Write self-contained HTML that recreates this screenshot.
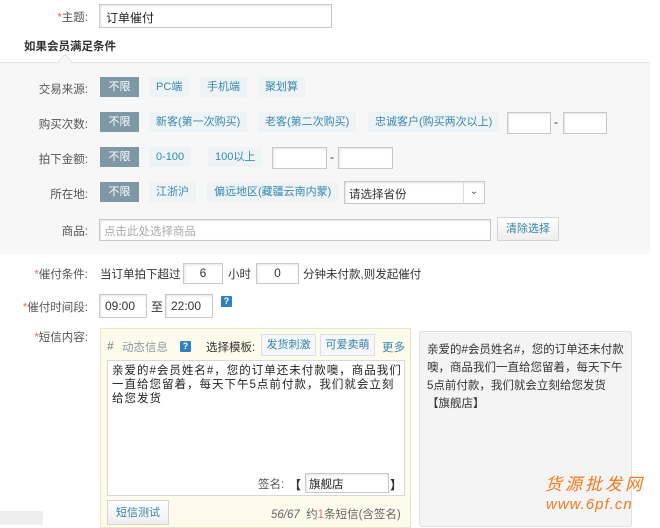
<!DOCTYPE html>
<html><head><meta charset="utf-8"><style>
*{box-sizing:border-box;margin:0;padding:0}
body{width:660px;height:525px;overflow:hidden;background:#fff;font:12px "Liberation Sans","Noto Sans CJK SC",sans-serif;color:#333;position:relative}
.a{position:absolute;white-space:nowrap}
.lbl{position:absolute;right:572px;text-align:right;color:#555;white-space:nowrap;font-size:11.5px}
.r{color:#e66}
.in{position:absolute;border:1px solid #c8c8c8;background:#fff;box-shadow:inset 1px 1px 2px #e4e4e4}
.bx{position:absolute;height:20px;line-height:20px;padding:0 7px;color:#3a88ad;background:#eef3f5;font-size:11px}
.on{background:#7e98a6;color:#fff;padding:0;width:39px;text-align:center}
.q{position:absolute;width:11px;height:11px;background:#2e80c0;color:#fff;font-size:9px;font-weight:bold;line-height:11px;text-align:center;border-radius:1px}
.btn{position:absolute;border:1px solid #d4d4d4;background:linear-gradient(#fff,#eee);color:#3a7fa8;text-align:center;font-size:11px}
</style></head><body>
<div class="lbl" style="top:9px"><span class="r">*</span>主题:</div>
<div class="in" style="left:99px;top:4px;width:233px;height:24px;padding:4px 6px;color:#222;font-size:12px">订单催付</div>
<div class="a" style="left:24px;top:38px;font-weight:bold;color:#333;font-size:11.5px">如果会员满足条件</div>
<div class="a" style="left:0;top:62px;width:650px;height:192px;background:#f7f7f7;border-top:1px solid #e4e4e4"></div>
<div class="a" style="left:60px;top:56px;width:10px;height:10px;background:#f7f7f7;border-left:1px solid #e4e4e4;border-top:1px solid #e4e4e4;transform:rotate(45deg)"></div>

<div class="lbl" style="top:81px">交易来源:</div>
<div class="bx on" style="left:100px;top:77px">不限</div>
<div class="bx" style="left:149px;top:77px">PC端</div>
<div class="bx" style="left:200px;top:77px">手机端</div>
<div class="bx" style="left:258px;top:77px">聚划算</div>

<div class="lbl" style="top:116px">购买次数:</div>
<div class="bx on" style="left:100px;top:112px">不限</div>
<div class="bx" style="left:149px;top:112px">新客(第一次购买)</div>
<div class="bx" style="left:258px;top:112px">老客(第二次购买)</div>
<div class="bx" style="left:368px;top:112px">忠诚客户(购买两次以上)</div>
<div class="in" style="left:507px;top:112px;width:44px;height:22px"></div>
<div class="a" style="left:554px;top:115px">-</div>
<div class="in" style="left:563px;top:112px;width:44px;height:22px"></div>

<div class="lbl" style="top:151px">拍下金额:</div>
<div class="bx on" style="left:100px;top:147px">不限</div>
<div class="bx" style="left:149px;top:147px">0-100</div>
<div class="bx" style="left:208px;top:147px">100以上</div>
<div class="in" style="left:272px;top:147px;width:55px;height:22px"></div>
<div class="a" style="left:330px;top:150px">-</div>
<div class="in" style="left:338px;top:147px;width:55px;height:22px"></div>

<div class="lbl" style="top:186px">所在地:</div>
<div class="bx on" style="left:100px;top:182px">不限</div>
<div class="bx" style="left:149px;top:182px">江浙沪</div>
<div class="bx" style="left:207px;top:182px">偏远地区(藏疆云南内蒙)</div>
<div class="in" style="left:344px;top:181px;width:141px;height:23px;padding:4px 4px;color:#333;font-size:11.5px">请选择省份</div>
<div class="a" style="left:463px;top:182px;width:21px;height:21px;border-left:1px solid #ddd;text-align:center;font-size:10px;line-height:20px;color:#555">&#8964;</div>

<div class="lbl" style="top:223px">商品:</div>
<div class="in" style="left:99px;top:219px;width:392px;height:22px;padding:3px 4px;color:#aaa;font-size:11.5px">点击此处选择商品</div>
<div class="btn" style="left:497px;top:217px;width:62px;height:24px;line-height:22px">清除选择</div>

<div class="lbl" style="top:266px"><span class="r">*</span>催付条件:</div>
<div class="a" style="left:100px;top:266px;font-size:11.5px">当订单拍下超过</div>
<div class="in" style="left:183px;top:263px;width:40px;height:21px;text-align:center;line-height:19px">6</div>
<div class="a" style="left:228px;top:266px;font-size:11.5px">小时</div>
<div class="in" style="left:256px;top:263px;width:43px;height:21px;text-align:center;line-height:19px">0</div>
<div class="a" style="left:303px;top:266px;font-size:11.5px">分钟未付款,则发起催付</div>

<div class="lbl" style="top:299px"><span class="r">*</span>催付时间段:</div>
<div class="in" style="left:99px;top:294px;width:48px;height:24px;padding:4px 5px">09:00</div>
<div class="a" style="left:151px;top:298px">至</div>
<div class="in" style="left:165px;top:294px;width:48px;height:24px;padding:4px 5px">22:00</div>
<div class="q" style="left:221px;top:296px">?</div>

<div class="lbl" style="top:329px"><span class="r">*</span>短信内容:</div>
<div class="a" style="left:100px;top:328px;width:311px;height:200px;background:#fdfcec;border:1px solid #ebe6c4"></div>
<div class="a" style="left:107px;top:339px;color:#8a9aa5;font-weight:bold">#</div>
<div class="a" style="left:122px;top:339px;color:#8a9aa5;font-size:11.5px">动态信息</div>
<div class="q" style="left:180px;top:341px">?</div>
<div class="a" style="left:206px;top:339px;font-size:11.5px">选择模板:</div>
<div class="btn" style="left:261px;top:334px;width:55px;height:22px;line-height:20px;background:#f4f8fa;border-color:#dde">发货刺激</div>
<div class="btn" style="left:320px;top:334px;width:55px;height:22px;line-height:20px;background:#f4f8fa;border-color:#dde">可爱卖萌</div>
<div class="a" style="left:382px;top:339px;color:#3a88ad;font-size:11.5px">更多</div>
<div class="a" style="left:107px;top:360px;width:298px;height:136px;background:#fff;border:1px solid #d8d8d8"></div>
<div class="a" style="left:112px;top:364px;width:292px;white-space:normal;line-height:14px;letter-spacing:1px;font-size:11.5px;color:#222">亲爱的#会员姓名#，您的订单还未付款噢，商品我们一直给您留着，每天下午5点前付款，我们就会立刻给您发货</div>
<div class="a" style="left:258px;top:476px;color:#555;font-size:11.5px">签名:</div>
<div class="a" style="left:289px;top:476px;font-weight:bold">【</div>
<div class="in" style="left:305px;top:473px;width:84px;height:20px;padding:2px 3px;color:#222;font-size:11.5px">旗舰店</div>
<div class="a" style="left:390px;top:476px;font-weight:bold">】</div>
<div class="btn" style="left:107px;top:500px;width:62px;height:25px;line-height:24px">短信测试</div>
<div class="a" style="left:271px;top:506px;color:#666;font-size:11.5px"><i>56/67</i>&nbsp; 约<span class="r">1</span>条短信(含签名)</div>

<div class="a" style="left:419px;top:331px;width:213px;height:196px;background:#f4f4f4;border:1px solid #e0e0e0;border-radius:3px"></div>
<div class="a" style="left:427px;top:341px;width:200px;white-space:normal;line-height:18px;color:#333;font-size:11.5px">亲爱的#会员姓名#，您的订单还未付款噢，商品我们一直给您留着，每天下午5点前付款，我们就会立刻给您发货【旗舰店】</div>
<div class="a" style="left:545px;top:470px;color:#f07a20;font-size:17px;font-style:italic;letter-spacing:3px">货源批发网</div>
<div class="a" style="left:546px;top:496px;color:#f07a20;font-size:15px;font-style:italic;letter-spacing:1px">www.6pf.cn</div>
<div class="a" style="left:0;top:511px;width:43px;height:14px;background:#eee"></div>
</body></html>
